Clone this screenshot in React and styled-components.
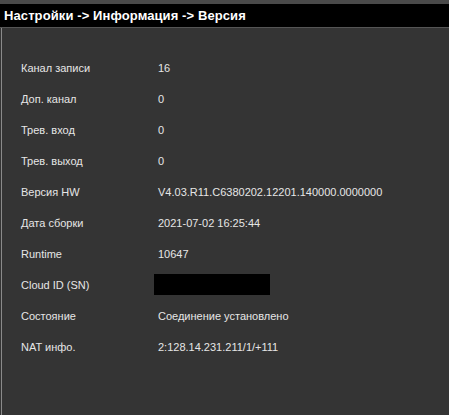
import styled, { createGlobalStyle } from "styled-components";

const Global = createGlobalStyle`
  html, body {
    margin: 0;
    padding: 0;
    background: #343434;
  }
`;

let Screen = styled.div`
  width: 449px;
  height: 415px;
  background: #343434;
  display: flex;
  flex-direction: column;
  overflow: hidden;
`;

let Header = styled.div`
  height: 23px;
  background: #000;
  border-top: 4px solid #4a4a4a;
  border-bottom: 1px solid #555;
  color: #fff;
  font-family: "Liberation Sans", Arial, sans-serif;
  font-weight: bold;
  font-size: 13px;
  letter-spacing: 0.1px;
  line-height: 23px;
  padding-left: 4px;
`;

let Body = styled.div`
  flex: 1;
  margin-left: 1px;
  border-left: 1px solid #8a8a8a;
  padding: 24px 0 0 19px;
`;

let Table = styled.div`
  display: grid;
  grid-template-columns: 137px 1fr;
  grid-auto-rows: 31px;
  align-items: center;
  font-family: "Liberation Sans", Arial, sans-serif;
  font-size: 11px;
  color: #e6e6e6;
`;

let Cell = styled.div`
  white-space: nowrap;
`;

let Hidden = styled.div`
  width: 116px;
  height: 21px;
  background: #000;
  margin-left: -4px;
`;

const rows = [
  ["Канал записи", "16"],
  ["Доп. канал", "0"],
  ["Трев. вход", "0"],
  ["Трев. выход", "0"],
  ["Версия HW", "V4.03.R11.C6380202.12201.140000.0000000"],
  ["Дата сборки", "2021-07-02 16:25:44"],
  ["Runtime", "10647"],
  ["Cloud ID (SN)", null],
  ["Состояние", "Соединение установлено"],
  ["NAT инфо.", "2:128.14.231.211/1/+111"],
];

export default function App() {
  return (
    <Screen>
      <Global />
      <Header>Настройки -&gt; Информация -&gt; Версия</Header>
      <Body>
        <Table>
          {rows.map(([label, value]) => [
            <Cell key={label + "l"}>{label}</Cell>,
            value === null ? (
              <Hidden key={label + "v"} />
            ) : (
              <Cell key={label + "v"}>{value}</Cell>
            ),
          ])}
        </Table>
      </Body>
    </Screen>
  );
}
